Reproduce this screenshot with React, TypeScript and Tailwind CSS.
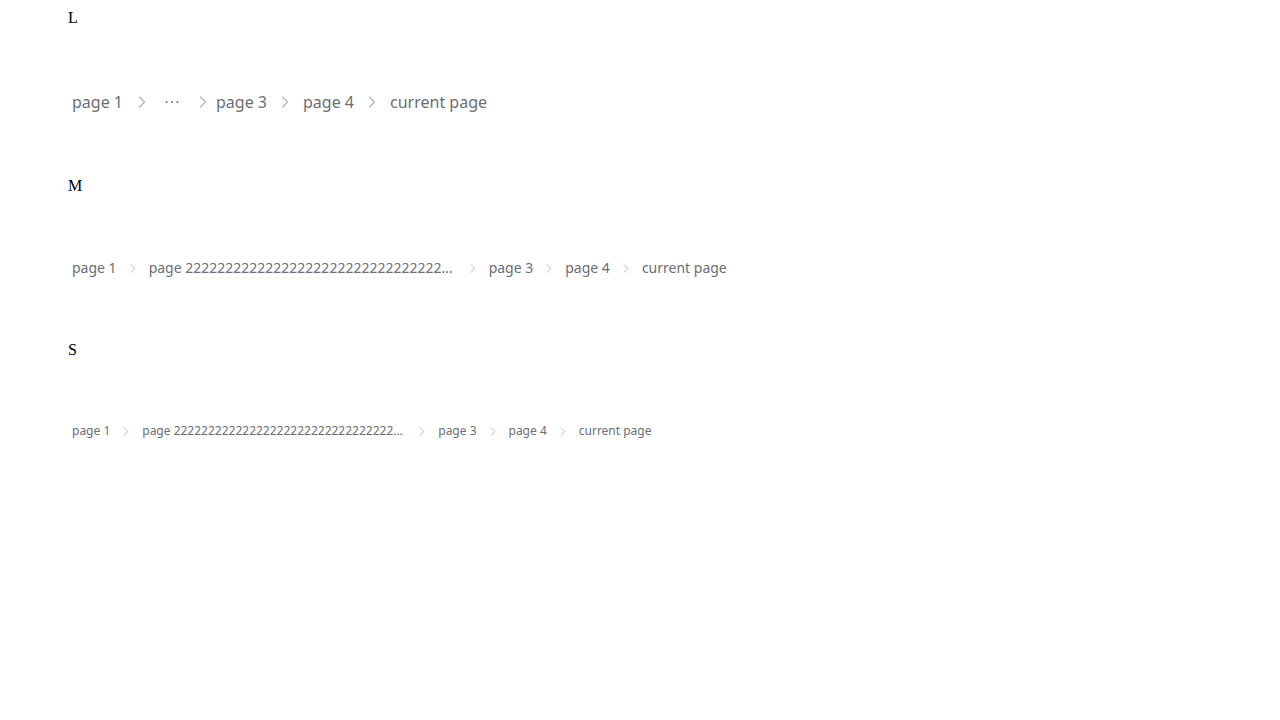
import React from "react";

const long = "page 2222222222222222222222222222222222222222222222222222";

function Chevron({ w, h }: { w: number; h: number }) {
  return (
    <svg width={w} height={h} viewBox="0 0 8 12" fill="none" className="block">
      <path d="M1.5 1 L6.5 6 L1.5 11" stroke="#b0b2b5" strokeWidth="1.2" strokeLinecap="round" strokeLinejoin="round" />
    </svg>
  );
}

function Sep({ size }: { size: "L" | "M" | "S" }) {
  if (size === "L")
    return (
      <span className="flex w-[36px] justify-center">
        <Chevron w={8} h={12} />
      </span>
    );
  return (
    <span className="flex w-[32px] justify-center">
      <Chevron w={6} h={9} />
    </span>
  );
}

export default function App() {
  const font = { fontFamily: '"Noto Sans", sans-serif' };
  return (
    <div className="flex flex-col gap-[60px] pt-[6px] pl-[68px]" style={{ fontFamily: '"Liberation Serif", serif' }}>
      <div className="text-base leading-6 text-black">L</div>
      <div className="flex items-center pl-[4px] text-[16px] leading-6 text-[#6b6e73]" style={font}>
        <span>page 1</span>
        <span className="flex w-[38px] justify-center">
          <Chevron w={8} h={12} />
        </span>
        <span className="flex w-[24px] items-center justify-start pl-[4px]">
          <svg width="14" height="4" viewBox="0 0 14 4" className="block">
            <circle cx="1.5" cy="2" r="1" fill="#6b6e73" />
            <circle cx="7" cy="2" r="1" fill="#6b6e73" />
            <circle cx="12.5" cy="2" r="1" fill="#6b6e73" />
          </svg>
        </span>
        <span className="flex w-[31px] justify-center pl-[5px]">
          <Chevron w={8} h={12} />
        </span>
        <span>page 3</span>
        <Sep size="L" />
        <span>page 4</span>
        <Sep size="L" />
        <span>current page</span>
      </div>
      <div className="text-base leading-6 text-black">M</div>
      <div className="flex items-center pl-[4px] text-[14px] leading-5 text-[#6b6e73]" style={font}>
        <span>page 1</span>
        <Sep size="M" />
        <span className="max-w-[308px] truncate">{long}</span>
        <Sep size="M" />
        <span>page 3</span>
        <Sep size="M" />
        <span>page 4</span>
        <Sep size="M" />
        <span>current page</span>
      </div>
      <div className="text-base leading-6 text-black">S</div>
      <div className="flex items-center pl-[4px] text-[12px] leading-[18px] text-[#6b6e73]" style={font}>
        <span>page 1</span>
        <Sep size="S" />
        <span className="max-w-[264px] truncate">{long}</span>
        <Sep size="S" />
        <span>page 3</span>
        <Sep size="S" />
        <span>page 4</span>
        <Sep size="S" />
        <span>current page</span>
      </div>
    </div>
  );
}
